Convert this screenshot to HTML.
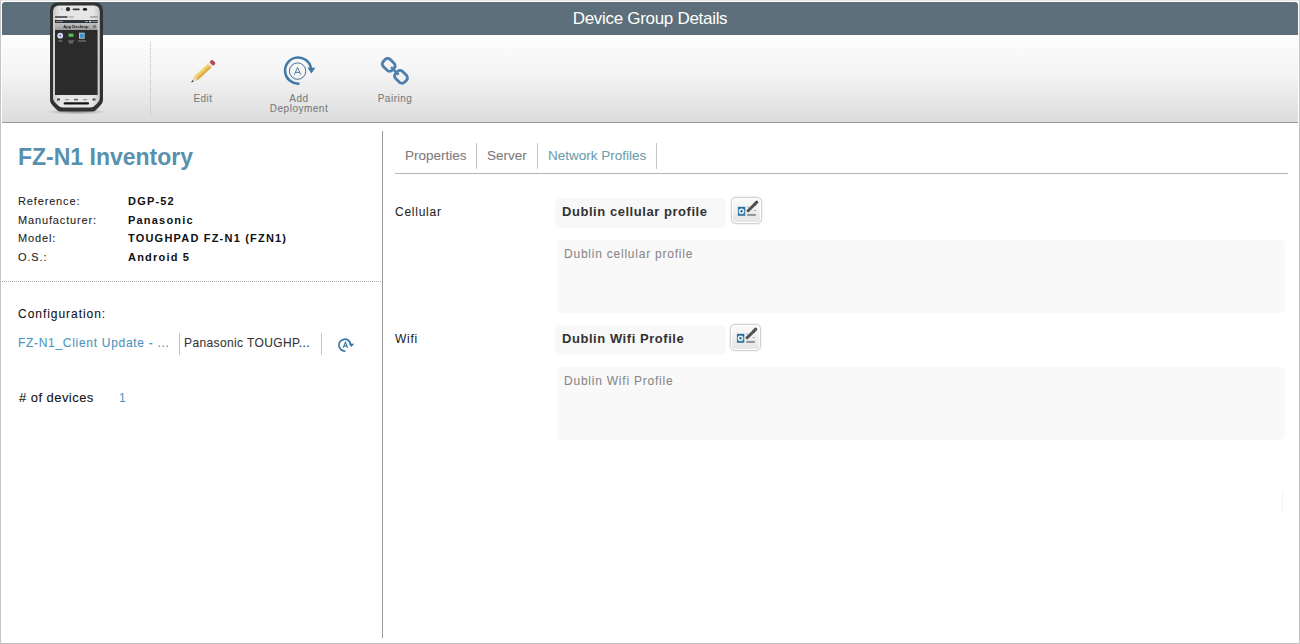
<!DOCTYPE html>
<html><head><meta charset="utf-8">
<style>
*{margin:0;padding:0;box-sizing:border-box}
html,body{width:1300px;height:644px;overflow:hidden;background:#fff;font-family:"Liberation Sans",sans-serif}
.abs{position:absolute}
#frame{position:absolute;left:0;top:0;width:1300px;height:644px;border-left:1px solid #c4c4c4;border-right:1px solid #c4c4c4;border-bottom:1px solid #c0c0c0;border-top:1px solid #e6e6e6}
#hdr{position:absolute;left:2px;top:2px;width:1296px;height:33px;background:#5d6f7a;border-radius:3px 3px 0 0}
#hdr .t{position:absolute;left:0;width:100%;top:7px;text-align:center;color:#fff;font-size:17px;line-height:20px;letter-spacing:-0.3px}
#tb{position:absolute;left:2px;top:35px;width:1296px;height:88px;background:linear-gradient(#fdfdfd,#f4f4f4 45%,#dcdcdc);border-bottom:1px solid #9a9a9a}
.sep-dot{position:absolute;left:150px;top:42px;width:1px;height:74px;background:repeating-linear-gradient(#bdbdbd 0 1px,transparent 1px 2px)}
.lbl{position:absolute;color:#7a7a7a;font-size:10px;line-height:10px;letter-spacing:0.5px;text-align:center;width:100px}
.line{position:absolute;background:#999}
.k{position:absolute;left:18px;font-size:11px;color:#222;letter-spacing:0.85px;line-height:14px}
.v{position:absolute;left:128px;font-size:11px;color:#111;font-weight:bold;letter-spacing:1.2px;line-height:14px}
.tab{position:absolute;top:148px;font-size:13.5px;line-height:16px;color:#7c7c7c;letter-spacing:0}
.vsep{position:absolute;width:1px;background:#c4c4c4}
.flabel{position:absolute;left:395px;font-size:12px;color:#222;letter-spacing:0.75px;line-height:14px}
.pbox{position:absolute;left:555px;width:171px;height:30px;background:#f8f8f8;border-radius:5px;font-weight:bold;color:#333;font-size:13px;letter-spacing:0.55px;line-height:16px;padding:6px 0 0 7px}
.ta{position:absolute;left:557px;width:728px;height:73px;background:#f9f9f9;border-radius:5px;color:#888;font-size:12px;letter-spacing:0.77px;line-height:14px;padding:7px 0 0 7px}
.ebtn{position:absolute;width:31px;height:27px;border:1px solid #d2d2d2;border-radius:5px;background:linear-gradient(#fbfbfb,#f0f0f0 50%,#e4e4e4);box-shadow:inset 0 0 0 1px #fff,0 0 2px rgba(0,0,0,.18)}
.k,.heavy{-webkit-text-stroke:0.08px currentColor}
.flabel{-webkit-text-stroke:0.05px currentColor}
.tab,.ta,.lbl{-webkit-text-stroke:0.08px currentColor}
</style></head><body>
<div id="frame"></div>
<div id="hdr"><div class="t">Device Group Details</div></div>
<div id="tb">
</div>
<div class="sep-dot"></div>
<svg class="abs" style="left:44px;top:0;filter:blur(0.3px)" width="64" height="118" viewBox="0 0 64 118">
<defs>
<linearGradient id="bz" x1="0" x2="1"><stop offset="0" stop-color="#c8c8c8"/><stop offset=".15" stop-color="#e6e6e6"/><stop offset=".85" stop-color="#e6e6e6"/><stop offset="1" stop-color="#c8c8c8"/></linearGradient>
<linearGradient id="ab" x1="0" y1="0" x2="0" y2="1"><stop offset="0" stop-color="#c2c2c2"/><stop offset="1" stop-color="#9a9a9a"/></linearGradient>
<radialGradient id="sh"><stop offset="0" stop-color="#000" stop-opacity=".35"/><stop offset="1" stop-color="#000" stop-opacity="0"/></radialGradient>
</defs>
<ellipse cx="32.5" cy="111.8" rx="30" ry="2.8" fill="url(#sh)"/>
<path d="M14,2.5 H51 Q59,2.5 59,11 V100 Q59,103 55,107 L52,110 Q50.5,111.5 48,111.5 H17 Q14.5,111.5 13,110 L10,107 Q6,103 6,100 V11 Q6,2.5 14,2.5 Z" fill="#323232"/>
<path d="M15,5.5 H50 Q55.8,5.5 55.8,12 V98 Q55.8,101 52,104.5 Q49.5,107.5 46,107.5 H19 Q15.5,107.5 13,104.5 Q9,101 9,98 V12 Q9,5.5 15,5.5 Z" fill="url(#bz)"/>
<circle cx="24" cy="9.2" r="2.1" fill="#2a2a2a"/>
<rect x="28.6" y="8.4" width="7.2" height="1.8" rx=".9" fill="#3a3a3a"/>
<ellipse cx="41" cy="9.3" rx="2.1" ry="1.5" fill="#1e1e1e"/>
<circle cx="18" cy="9.2" r=".6" fill="#777"/>
<rect x="11" y="16" width="12.5" height="2" fill="#444" opacity=".8"/>
<rect x="25" y="16.2" width="5" height="1.6" fill="#888" opacity=".5"/>
<rect x="46" y="16.2" width="7.5" height="1.6" fill="#777" opacity=".6"/>
<rect x="11" y="20" width="42.6" height="3" fill="#2e343d"/>
<rect x="12" y="21" width="7" height="1" fill="#8a8f96"/>
<rect x="41" y="21" width="3" height="1" fill="#9aa0a6"/>
<rect x="45" y="20.8" width="2.2" height="1.4" fill="#e0e0e0"/>
<rect x="48" y="21" width="5" height="1" fill="#8a8f96"/>
<rect x="11" y="23" width="42.6" height="7" fill="url(#ab)"/>
<text x="31.8" y="28.3" font-size="4.1" text-anchor="middle" fill="#222" font-family="Liberation Sans" font-weight="bold">App Desktop</text>
<rect x="49" y="25" width="3" height="3" fill="#666" opacity=".7"/>
<rect x="11" y="30" width="42.6" height="65" fill="#2b2b2c"/>
<circle cx="16.2" cy="35.7" r="2.9" fill="#d4d7f0"/>
<circle cx="16.2" cy="35.5" r="0.9" fill="#6c74b8"/>
<rect x="24.4" y="33.5" width="5.2" height="3.6" fill="#3a9a3e"/>
<rect x="25" y="34.2" width="4" height="1.6" fill="#6ccc6a"/>
<rect x="35" y="32.7" width="5.6" height="6" fill="#a8d4ea"/>
<rect x="35.8" y="33.6" width="4" height="4.2" fill="#3f8fc8"/>
<rect x="14.5" y="40.5" width="4" height="1" fill="#888"/>
<rect x="24" y="40.5" width="6" height="1" fill="#888"/>
<rect x="25" y="42.3" width="4" height="1" fill="#888"/>
<rect x="34" y="40.5" width="8" height="1" fill="#888"/>
<rect x="13" y="98.5" width="3" height="2" fill="#444"/>
<rect x="21" y="99.2" width="4" height="1" fill="#888"/>
<rect x="30" y="98.8" width="4" height="1.6" fill="#666"/>
<rect x="39" y="99.2" width="4" height="1" fill="#888"/>
<rect x="48.5" y="98.5" width="3" height="2" fill="#444"/>
<rect x="19.6" y="102.3" width="25.5" height="2.3" rx="1.1" fill="#151515"/>
</svg>
<svg class="abs" style="left:180px;top:50px" width="250" height="40" viewBox="180 50 250 40">
<defs><linearGradient id="pb" x1="0" y1="0" x2="0" y2="1"><stop offset="0" stop-color="#f8e08c"/><stop offset=".5" stop-color="#efc65a"/><stop offset="1" stop-color="#d9a23a"/></linearGradient></defs>
<g transform="translate(191.2,82.4) rotate(-42.6)">
<polygon points="0,0 6.5,-2.65 6.5,2.65" fill="#ecd2b0"/>
<polygon points="0,0 2.4,-1 2.4,1" fill="#3a3a3a"/>
<rect x="6.5" y="-2.65" width="18.5" height="5.3" fill="url(#pb)"/>
<rect x="6.5" y="1.2" width="18.5" height="1.45" fill="#d9a94e" opacity=".8"/>
<rect x="25" y="-2.65" width="2.6" height="5.3" fill="#ececec"/>
<rect x="27.2" y="-2.8" width="3.8" height="5.6" rx="1.5" fill="#b54b49"/>
</g>
<path d="M299.4,83.6 A13.1,13.1 0 1 1 311,67.9" fill="none" stroke="#3f78a6" stroke-width="2.5"/>
<polygon points="307.4,67.4 315.4,67.8 311.4,73.4" fill="#3f78a6"/>
<circle cx="297.6" cy="71.1" r="8.2" fill="none" stroke="#44709a" stroke-width="1"/>
<path d="M294.4,74.6 L297.6,67.4 L300.8,74.6 M295.4,72.4 H299.8" fill="none" stroke="#3f78a6" stroke-width="0.95"/>
<g fill="none" stroke="#4d80ac" stroke-width="2.9">
<rect x="-6.3" y="-4.9" width="12.6" height="9.8" rx="3.6" transform="translate(388.7,64.9) rotate(45)"/>
<rect x="-6.3" y="-4.9" width="12.6" height="9.8" rx="3.6" transform="translate(401,76.9) rotate(45)"/>
<path d="M391,67.1 L398.7,74.7" stroke-width="2.4"/>
</g>
</svg>

<!-- toolbar labels -->
<div class="lbl" style="left:153px;top:94px">Edit</div>
<div class="lbl" style="left:249px;top:94px">Add<br>Deployment</div>
<div class="lbl" style="left:345px;top:94px">Pairing</div>

<!-- left panel -->
<div class="abs" style="left:18px;top:144px;font-size:23px;line-height:26px;font-weight:bold;color:#5891ae">FZ-N1 Inventory</div>
<div class="k" style="top:194px">Reference:</div><div class="v" style="top:194px">DGP-52</div>
<div class="k" style="top:213px">Manufacturer:</div><div class="v" style="top:213px">Panasonic</div>
<div class="k" style="top:231px">Model:</div><div class="v" style="top:231px">TOUGHPAD FZ-N1 (FZN1)</div>
<div class="k" style="top:250px">O.S.:</div><div class="v" style="top:250px">Android 5</div>
<div class="abs" style="left:2px;top:281px;width:380px;height:1px;background:repeating-linear-gradient(90deg,#a8a8a8 0 1px,transparent 1px 2px)"></div>
<div class="abs heavy" style="left:18px;top:307px;font-size:12px;line-height:14px;color:#111;letter-spacing:0.96px">Configuration:</div>
<div class="abs heavy" style="left:18px;top:336px;font-size:12px;line-height:14px;color:#4a94bd;letter-spacing:0.7px">FZ-N1_Client Update - ...</div>
<div class="vsep" style="left:179px;top:333px;height:22px"></div>
<div class="abs heavy" style="left:184px;top:336px;font-size:12px;line-height:14px;color:#333;letter-spacing:0.38px">Panasonic TOUGHP...</div>
<div class="vsep" style="left:321px;top:333px;height:22px"></div>
<svg class="abs" style="left:330px;top:330px" width="30" height="30" viewBox="330 330 30 30">
<path d="M345.4,351 A5.9,5.9 0 1 1 350.6,344" fill="none" stroke="#3b74a3" stroke-width="1.7"/>
<polygon points="348.6,343.4 354.2,343.8 351.4,347" fill="#3b74a3"/>
<path d="M343.1,347.9 L345.4,342.2 L347.7,347.9 M343.9,346.1 H346.9" fill="none" stroke="#3a7898" stroke-width="1.05"/>
</svg>
<div class="abs" style="left:1282px;top:491px;width:1px;height:20px;background:#f3f3f3"></div>
<div class="abs heavy" style="left:19px;top:391px;font-size:13px;line-height:14px;color:#111;letter-spacing:0.45px"># of devices</div>
<div class="abs" style="left:119px;top:391px;font-size:12px;line-height:14px;color:#4a94bd">1</div>

<div class="line" style="left:382px;top:131px;width:1px;height:507px"></div>

<!-- tabs -->
<div class="tab" style="left:405px">Properties</div>
<div class="vsep" style="left:476px;top:143px;height:26px"></div>
<div class="tab" style="left:487px">Server</div>
<div class="vsep" style="left:537px;top:143px;height:26px"></div>
<div class="tab" style="left:548px;color:#6d9dad">Network Profiles</div>
<div class="vsep" style="left:656px;top:143px;height:26px"></div>
<div class="abs" style="left:395px;top:173px;width:893px;height:1px;background:#b4b4b4"></div>

<div class="flabel" style="top:205px">Cellular</div>
<div class="pbox" style="top:198px">Dublin cellular profile</div>
<div class="ebtn" style="left:731px;top:197px"></div>
<svg class="abs" style="left:731px;top:197px" width="31" height="28" viewBox="0 0 31 28">
<defs><linearGradient id="bs197" x1="0" y1="0" x2="0" y2="1"><stop offset="0" stop-color="#2b6d98"/><stop offset="1" stop-color="#3f84aa"/></linearGradient></defs>
<rect x="6.9" y="9.8" width="7.4" height="9.1" fill="url(#bs197)"/>
<circle cx="10.5" cy="14.3" r="2" fill="none" stroke="#e3f1f8" stroke-width="1.6"/>
<circle cx="10.6" cy="14.3" r=".8" fill="#2a5f80"/>
<path d="M16.4,14.5 L24.2,6.7" stroke="#4c5157" stroke-width="3" stroke-linecap="butt"/>
<path d="M23.6,7.3 L25.7,5.2" stroke="#4c5157" stroke-width="3.2" stroke-linecap="round"/>
<polygon points="15.8,15.3 16.3,13 18,14.6" fill="#4c5157"/>
<rect x="16.2" y="16.9" width="8.7" height="2" fill="#949494"/>
<rect x="16.5" y="9.5" width="1.5" height="0.9" fill="#888"/>
<rect x="22.5" y="13" width="2.5" height="0.9" fill="#aaa"/>
</svg>
<div class="ta" style="top:240px">Dublin cellular profile</div>

<div class="flabel" style="top:332px">Wifi</div>
<div class="pbox" style="top:325px">Dublin Wifi Profile</div>
<div class="ebtn" style="left:730px;top:324px"></div>
<svg class="abs" style="left:730px;top:324px" width="31" height="28" viewBox="0 0 31 28">
<defs><linearGradient id="bs324" x1="0" y1="0" x2="0" y2="1"><stop offset="0" stop-color="#2b6d98"/><stop offset="1" stop-color="#3f84aa"/></linearGradient></defs>
<rect x="6.9" y="9.8" width="7.4" height="9.1" fill="url(#bs324)"/>
<circle cx="10.5" cy="14.3" r="2" fill="none" stroke="#e3f1f8" stroke-width="1.6"/>
<circle cx="10.6" cy="14.3" r=".8" fill="#2a5f80"/>
<path d="M16.4,14.5 L24.2,6.7" stroke="#4c5157" stroke-width="3" stroke-linecap="butt"/>
<path d="M23.6,7.3 L25.7,5.2" stroke="#4c5157" stroke-width="3.2" stroke-linecap="round"/>
<polygon points="15.8,15.3 16.3,13 18,14.6" fill="#4c5157"/>
<rect x="16.2" y="16.9" width="8.7" height="2" fill="#949494"/>
<rect x="16.5" y="9.5" width="1.5" height="0.9" fill="#888"/>
<rect x="22.5" y="13" width="2.5" height="0.9" fill="#aaa"/>
</svg>
<div class="ta" style="top:367px">Dublin Wifi Profile</div>

</body></html>
